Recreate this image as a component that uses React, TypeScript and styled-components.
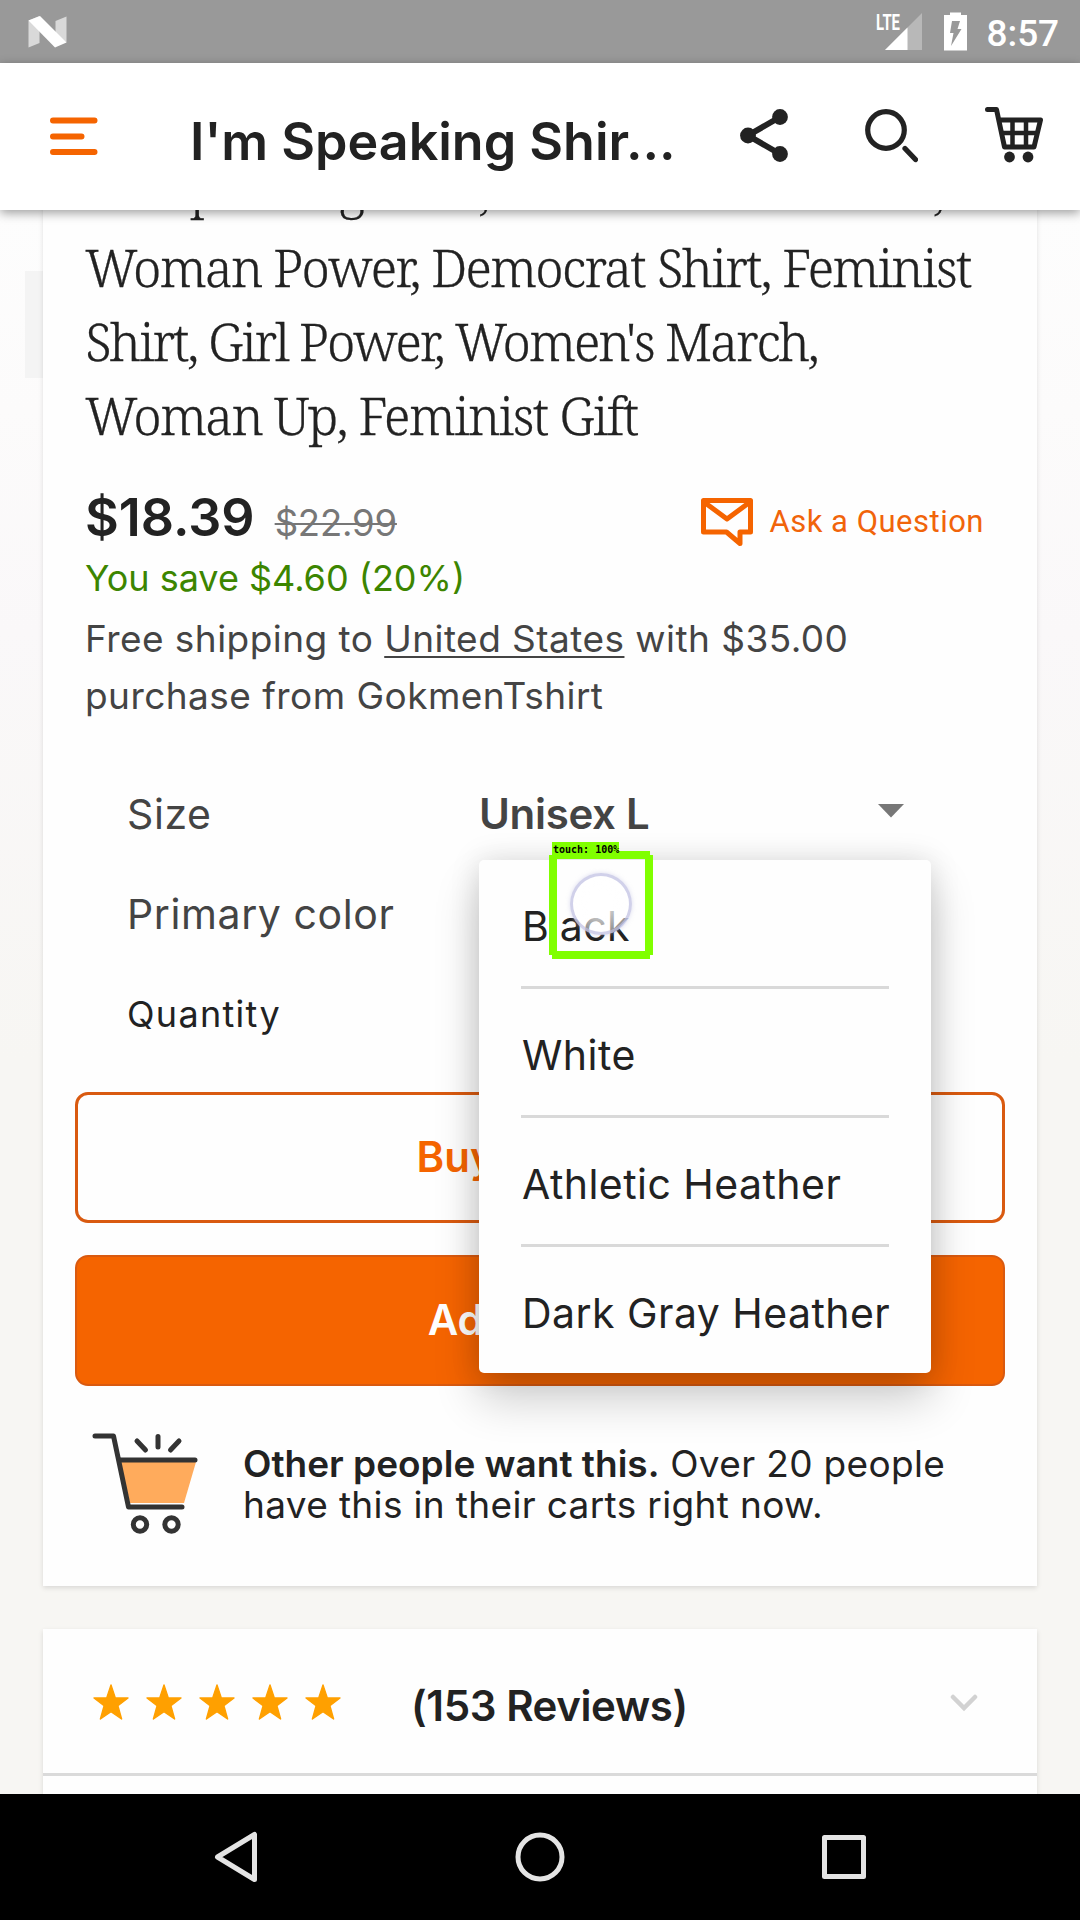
import React from 'react';
import styled, { createGlobalStyle } from 'styled-components';

const GlobalStyle = createGlobalStyle`
  * { box-sizing: border-box; }
  body { margin: 0; background: #000; }
`;

const sans = 'Inter, Roboto, "Liberation Sans", sans-serif';
const serif = '"Noto Serif", "Liberation Serif", serif';

const Screen = styled.div`
  width: 1080px;
  height: 1920px;
  display: flex;
  flex-direction: column;
  overflow: hidden;
  font-family: ${sans};
  color: #222;
`;

const StatusBar = styled.div`
  flex: none;
  height: 63px;
  display: flex;
  align-items: center;
  padding: 0 21px 0 28px;
  background: #999;
`;

const StatusIcons = styled.div`
  margin-left: auto;
  display: flex;
  align-items: center;
`;

const Clock = styled.span`
  margin: 4px 0 0 18px;
  font: 500 37px/44px Roboto, sans-serif;
  letter-spacing: -0.1px;
  color: #fff;
`;

const AppBar = styled.header`
  flex: none;
  position: relative;
  z-index: 2;
  height: 147px;
  display: flex;
  align-items: center;
  padding: 0 35px 0 50px;
  background: #fff;
  box-shadow: 0 3px 10px rgba(0, 0, 0, 0.38);
`;

const MenuIcon = styled.svg`
  margin-top: -2px;
`;

const AppTitle = styled.h1`
  margin: 11px 0 0 92px;
  flex: 1;
  font-size: 52px;
  line-height: 64px;
  font-weight: 600;
  white-space: nowrap;
`;

const Actions = styled.div`
  display: flex;
  align-items: center;
  gap: 75px;
  margin-top: -1px;

  svg:last-child { margin: -2px 0 0 -10px; }
`;

const Content = styled.main`
  flex: 1;
  min-height: 0;
  overflow: hidden;
  position: relative;
  padding: 0 43px;
  background: linear-gradient(#fdfdfd 0, #fcfbfb 200px, #faf8f9 420px, #f7f6f3 850px);
`;

const Peek = styled.div`
  position: absolute;
  left: 25px;
  top: 61px;
  width: 18px;
  height: 107px;
  background: #f4f4f4;
`;

const Card = styled.section`
  position: relative;
  background: #fefefe;
  box-shadow: 0 2px 5px rgba(0, 0, 0, 0.12);
`;

const ListingCard = styled(Card)`
  height: 1435px;
  margin-top: -59px;
`;

const Heading = styled.h2`
  margin: 0;
  padding-left: 42px;
  font: 300 51px/74px ${serif};
  white-space: nowrap;
  -webkit-text-stroke: 0.3px #222;
`;

const HeadingLine = styled.span<{ $spacing: number }>`
  display: block;
  letter-spacing: ${p => p.$spacing}px;

  &:first-child { margin-bottom: 5px; }
`;

const PriceRow = styled.div`
  display: flex;
  align-items: baseline;
  height: 60px;
  margin-top: 36px;
  padding: 0 53px 0 42px;
  line-height: 60px;
`;

const Price = styled.span`
  font-size: 52px;
  font-weight: 600;
`;

const OldPrice = styled.span`
  margin-left: 20px;
  font-size: 36.500px;
  letter-spacing: -0.2px;
  color: #777;
  text-decoration: line-through;
  text-decoration-thickness: 2px;
`;

const Ask = styled.a`
  margin: 8px 0 0 auto;
  display: flex;
  align-items: center;
  align-self: center;
  gap: 15px;
  font: 400 31px/40px Roboto, sans-serif;
  letter-spacing: 0.5px;
  color: #f1640a;
`;

const Savings = styled.div`
  margin-top: 8px;
  padding-left: 42px;
  font-size: 36px;
  line-height: 44px;
  color: #3c8500;
`;

const Shipping = styled.p`
  margin: 10px 0 0;
  padding-left: 42px;
  font-size: 37px;
  line-height: 57px;
  letter-spacing: 0.45px;
  color: #444;
  white-space: nowrap;
`;

const Country = styled.span`
  text-decoration: underline;
  text-decoration-thickness: 2px;
  text-underline-offset: 4px;
  text-decoration-skip-ink: none;
`;

const Form = styled.div`
  position: relative;
  z-index: 1;
  margin-top: 41px;
`;

const Field = styled.div`
  display: grid;
  grid-template-columns: 352px 399px 1fr;
  align-items: center;
  height: 100px;
  padding: 0 0 3px 84px;
`;

const Label = styled.span<{ $small?: boolean }>`
  font-size: ${p => (p.$small ? 36 : 41)}px;
  letter-spacing: ${p => (p.$small ? 1.3 : 0.6)}px;
  color: ${p => (p.$small ? '#222' : '#444')};
`;

const Value = styled.span`
  font-size: 42px;
  font-weight: 600;
  letter-spacing: -0.3px;
  color: #444;
`;

const Caret = styled.svg`
  margin-top: -6px;
`;

const Menu = styled.div`
  position: absolute;
  left: 436px;
  top: 95px;
  width: 452px;
  background: #fefefe;
  border-radius: 5px;
  box-shadow: 0 26px 46px rgba(0, 0, 0, 0.2), 0 0 30px rgba(0, 0, 0, 0.13);
`;

const Options = styled.ul`
  margin: 0;
  padding: 0 42px;
  list-style: none;
`;

const Option = styled.li`
  display: flex;
  align-items: center;
  height: 129px;
  padding-top: 6px;
  text-indent: 1px;
  font-size: 41px;
  letter-spacing: 0.45px;
  white-space: nowrap;
  border-bottom: 3px solid #d9d9d9;

  &:last-child {
    height: 126px;
    border-bottom: 0;
  }
`;

const TouchBox = styled.div`
  position: absolute;
  left: 70px;
  top: -9px;
  width: 104px;
  height: 108px;
  padding: 8px;
  display: flex;

  &::before {
    content: '';
    position: absolute;
    inset: 0;
    border: 8px solid #80ff00;
    clip-path: polygon(
      3px 0, 101px 0, 101px 4px, 104px 4px, 104px 104px, 101px 104px,
      101px 108px, 3px 108px, 3px 104px, 0 104px, 0 4px, 3px 4px
    );
  }
`;

const TouchLabel = styled.span`
  position: absolute;
  left: 3px;
  top: -9px;
  width: 67px;
  height: 12px;
  padding-left: 1px;
  font: bold 10px/15px "DejaVu Sans Mono", monospace;
  white-space: nowrap;
  color: #000;
  background: #80ff00;
`;

const TouchRing = styled.span`
  width: 62px;
  height: 62px;
  margin: 14px 0 0 13px;
  border-radius: 50%;
  border: 3px solid rgba(190, 190, 225, 0.7);
  background: radial-gradient(rgba(255, 255, 255, 0.75) 30%, rgba(255, 255, 255, 0.35) 100%);
  box-shadow: 0 0 4px rgba(190, 190, 225, 0.5);
`;

const Buttons = styled.div`
  display: flex;
  flex-direction: column;
  gap: 32px;
  margin: 27px 32px 0;
`;

const Button = styled.button<{ $filled?: boolean; $shift?: number }>`
  height: 131px;
  padding: 0 ${p => p.$shift ?? 0}px 1px 0;
  border: ${p => (p.$filled ? 2 : 3)}px solid #d95a10;
  border-radius: 13px;
  font: 600 42px/50px ${sans};
  color: ${p => (p.$filled ? '#fff' : '#f56400')};
  background: ${p => (p.$filled ? '#f56400' : '#fefefe')};
`;

const Demand = styled.div`
  display: flex;
  align-items: center;
  margin-top: 43px;
  padding-left: 46px;
  gap: 44px;
`;

const DemandText = styled.p`
  margin: 4px 0 0;
  font-size: 37px;
  line-height: 41px;
  letter-spacing: 0.35px;
  white-space: nowrap;

  b {
    font-weight: 600;
    letter-spacing: 0;
  }
`;

const ReviewsCard = styled(Card)`
  height: 300px;
  margin-top: 43px;
`;

const ReviewsRow = styled.div`
  display: flex;
  align-items: center;
  height: 147px;
  padding: 3px 59px 0 50px;
  border-bottom: 3px solid #dadada;
`;

const Stars = styled.div`
  display: flex;
  gap: 17px;
  margin-top: -1px;
`;

const ReviewCount = styled.span`
  flex: 1;
  margin: 6px 0 0 70px;
  font-size: 42px;
  line-height: 52px;
  font-weight: 600;
  letter-spacing: -0.4px;
`;

const NavBar = styled.nav`
  flex: none;
  position: relative;
  z-index: 2;
  height: 126px;
  display: flex;
  align-items: center;
  justify-content: space-between;
  padding: 0 212px 0 210px;
  background: #000;
`;

const menuOptions = ['Black', 'White', 'Athletic Heather', 'Dark Gray Heather'];

const Star = () => (
  <svg width="36" height="36" viewBox="0 0 36 36" fill="#ffa000" stroke="#ffa000" strokeWidth="1.4" strokeLinejoin="round">
    <path d="M18 1 L22.3 14 L35 14 L24.9 21.8 L28.6 35 L18 27.6 L7.4 35 L11.1 21.8 L1 14 L13.7 14 Z" />
  </svg>
);

export default function App() {
  return (
    <>
      <GlobalStyle />
      <Screen>
        <StatusBar>
          <svg width="39" height="32" viewBox="0 0 39 32">
            <path d="M.5 4.5 11.5 0V27L.5 31.5ZM27.5 5 38.5 .5V26.5L27.5 20Z" fill="#d9d9d9" />
            <path d="M.5 4.5 12 0 38.5 26.5 27 31.5Z" fill="#fff" />
          </svg>
          <StatusIcons>
            <svg width="94" height="40" viewBox="0 0 94 40">
              <text x="1" y="17.500" fontFamily="Roboto, sans-serif" fontWeight="700" fontSize="22" fill="#fff" textLength="24" lengthAdjust="spacingAndGlyphs">LTE</text>
              <path d="M47 1V38H10Z" fill="#b8b8b8" />
              <path d="M32.5 15.5V38H10Z" fill="#fff" />
              <path d="M69 3H75V.5H86V3H92V38.500H69Z" fill="#fff" />
              <path d="M77 9H85L82.500 17H86.500L76 34L78.500 21H75Z" fill="#999" />
            </svg>
            <Clock>8:57</Clock>
          </StatusIcons>
        </StatusBar>

        <AppBar>
          <MenuIcon width="48" height="40" viewBox="0 0 48 40" fill="none" stroke="#f56400" strokeWidth="6" strokeLinecap="round">
            <path d="M3 4.500H44.500M3 20.500H31.500M3 36H44.500" />
          </MenuIcon>
          <AppTitle>I'm Speaking Shir...</AppTitle>
          <Actions>
            <svg width="50" height="56" viewBox="0 0 50 56" fill="#222">
              <path d="M41 9 9 27.500 41 46" fill="none" stroke="#222" strokeWidth="6" />
              <circle cx="41" cy="9" r="7.900" />
              <circle cx="9" cy="27.500" r="7.900" />
              <circle cx="41" cy="46" r="7.900" />
            </svg>
            <svg width="54" height="56" viewBox="0 0 54 56" fill="none" stroke="#222">
              <circle cx="22" cy="22" r="18.300" strokeWidth="5.200" />
              <path d="M41 40.500 51.500 51.500" strokeWidth="5.200" strokeLinecap="round" />
            </svg>
            <svg width="62" height="58" viewBox="0 0 62 58" fill="none" stroke="#222" strokeLinecap="round" strokeLinejoin="round">
              <path d="M4.500 3.500H13.500L21.500 41H51L57.500 14H16" strokeWidth="5" />
              <path d="M18 27H54M29.500 14V40M43 14V40" strokeWidth="4.500" strokeLinecap="butt" />
              <circle cx="26.500" cy="51" r="5.400" fill="#222" stroke="none" />
              <circle cx="45" cy="51" r="5.400" fill="#222" stroke="none" />
            </svg>
          </Actions>
        </AppBar>

        <Content>
          <Peek />
          <ListingCard>
            <Heading>
              <HeadingLine $spacing={-1.8}>I'm Speaking Shirt, Kamala Harris Shirt,</HeadingLine>
              <HeadingLine $spacing={-1.64}>Woman Power, Democrat Shirt, Feminist</HeadingLine>
              <HeadingLine $spacing={-1.95}>Shirt, Girl Power, Women's March,</HeadingLine>
              <HeadingLine $spacing={-1.55}>Woman Up, Feminist Gift</HeadingLine>
            </Heading>
            <PriceRow>
              <Price>$18.39</Price>
              <OldPrice>$22.99</OldPrice>
              <Ask>
                <svg width="54" height="50" viewBox="0 0 54 50" fill="none" stroke="#f56400" strokeWidth="5" strokeLinejoin="round">
                  <path d="M3.500 3.500H50.500V35H40V46.500L26.500 35H3.500Z" />
                  <path d="M4 5 27 22 50 5" />
                </svg>
                Ask a Question
              </Ask>
            </PriceRow>
            <Savings>You save $4.60 (20%)</Savings>
            <Shipping>
              Free shipping to <Country>United States</Country> with $35.00
              <br />
              purchase from GokmenTshirt
            </Shipping>
            <Form>
              <Field>
                <Label>Size</Label>
                <Value>Unisex L</Value>
                <Caret width="26" height="14" viewBox="0 0 26 14"><path d="M0 0H26L13 13.500Z" fill="#777" /></Caret>
              </Field>
              <Field><Label>Primary color</Label></Field>
              <Field><Label $small>Quantity</Label></Field>
              <Menu>
                <Options>
                  {menuOptions.map(option => <Option key={option}>{option}</Option>)}
                </Options>
                <TouchBox>
                  <TouchLabel>touch: 100%</TouchLabel>
                  <TouchRing />
                </TouchBox>
              </Menu>
            </Form>
            <Buttons>
              <Button $shift={36}>Buy it now</Button>
              <Button $filled>Add to cart</Button>
            </Buttons>
            <Demand>
              <svg width="110" height="106" viewBox="0 0 110 106" fill="none" stroke="#333" strokeWidth="5" strokeLinecap="round" strokeLinejoin="round">
                <path d="M31 33H107L95 74H41Z" fill="#ffab5c" stroke="none" />
                <path d="M6 7H24.500L39.500 78H93M32 31H106M48 12 56.500 21M69 7.500V18M90 12 81.500 21" />
                <circle cx="51" cy="95.500" r="6.700" />
                <circle cx="82.500" cy="95.500" r="6.700" />
              </svg>
              <DemandText>
                <b>Other people want this.</b> Over 20 people
                <br />
                have this in their carts right now.
              </DemandText>
            </Demand>
          </ListingCard>
          <ReviewsCard>
            <ReviewsRow>
              <Stars>{[0, 1, 2, 3, 4].map(i => <Star key={i} />)}</Stars>
              <ReviewCount>(153 Reviews)</ReviewCount>
              <svg width="28" height="18" viewBox="0 0 28 18" fill="none" stroke="#d2d2d2" strokeWidth="4.500" strokeLinecap="round">
                <path d="M3 3 14 14 25 3" />
              </svg>
            </ReviewsRow>
          </ReviewsCard>
        </Content>

        <NavBar>
          <svg width="50" height="56" viewBox="0 0 50 56" fill="none" stroke="#e4e4e4" strokeWidth="5" strokeLinejoin="round">
            <path d="M44.500 5.500V50.500L7.500 28Z" />
          </svg>
          <svg width="50" height="50" viewBox="0 0 50 50" fill="none" stroke="#e4e4e4" strokeWidth="5">
            <circle cx="25" cy="25" r="22" />
          </svg>
          <svg width="48" height="48" viewBox="0 0 48 48" fill="none" stroke="#e4e4e4" strokeWidth="5" strokeLinejoin="round">
            <rect x="4.500" y="4.500" width="39" height="39" />
          </svg>
        </NavBar>
      </Screen>
    </>
  );
}
